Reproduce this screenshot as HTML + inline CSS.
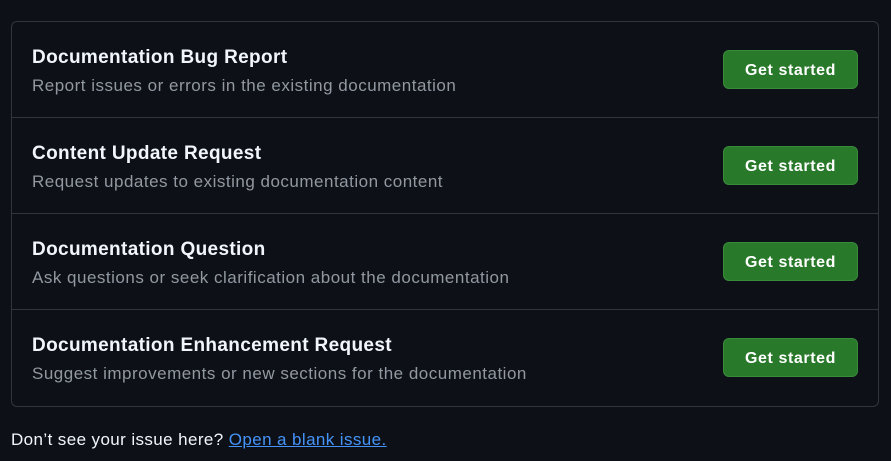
<!DOCTYPE html>
<html><head><style>
body{margin:0;background:#0d1117;width:891px;height:461px;overflow:hidden;font-family:"Liberation Sans",Arial,sans-serif;color:#f0f6fc}
.box{position:absolute;left:11px;top:21px;width:866px;height:384px;border:1px solid #30363d;border-radius:6px}
.row{position:relative;height:95px;border-bottom:1px solid #30363d}
.row:last-child{border-bottom:none}
.t{position:absolute;left:20px;top:25px;font-size:19px;font-weight:bold;color:#f0f6fc;letter-spacing:0.35px;white-space:nowrap}
.d{position:absolute;left:20px;top:54px;font-size:17px;color:#9198a1;letter-spacing:0.5px;white-space:nowrap}
.b{position:absolute;left:711px;top:28px;width:133px;height:37px;background:#29792a;border:1px solid #3a8a3b;border-radius:6px;color:#fff;font-size:16px;font-weight:bold;text-align:center;line-height:39px;letter-spacing:0.6px}
.f{position:absolute;left:11px;top:430px;font-size:17px;color:#f0f6fc;letter-spacing:0.4px;white-space:nowrap}
.f a{color:#4493f8;text-decoration:underline}
</style></head><body>
<div class="box">
<div class="row"><div class="t">Documentation Bug Report</div><div class="d">Report issues or errors in the existing documentation</div><div class="b">Get started</div></div>
<div class="row"><div class="t">Content Update Request</div><div class="d">Request updates to existing documentation content</div><div class="b">Get started</div></div>
<div class="row"><div class="t">Documentation Question</div><div class="d">Ask questions or seek clarification about the documentation</div><div class="b">Get started</div></div>
<div class="row"><div class="t">Documentation Enhancement Request</div><div class="d">Suggest improvements or new sections for the documentation</div><div class="b">Get started</div></div>
</div>
<div class="f">Don’t see your issue here? <a>Open a blank issue.</a></div>
</body></html>
